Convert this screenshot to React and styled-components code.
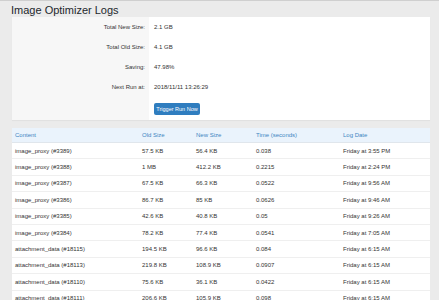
import React from 'react';
import styled, { createGlobalStyle } from 'styled-components';

const GlobalStyle = createGlobalStyle`
    html, body {
        margin: 0;
        padding: 0;
        background: #ebebeb;
        font-family: "Liberation Sans", Arial, sans-serif;
        color: #333;
    }
`;

const Page = styled.div`
    border-top: 1px solid #cfcfcf;
    padding: 2px 9px 0 12px;
`;

const Title = styled.h1`
    margin: 0 0 0 -1px;
    font-size: 11px;
    font-weight: 400;
    line-height: 14px;
    color: #23282d;
`;

const Panel = styled.div`
    display: grid;
    grid-template-columns: 137px 1fr;
    background: #fff;
    box-shadow: 0 1px 1px rgba(0, 0, 0, 0.04);
    height: 103px;
`;

const LabelCol = styled.div`
    background: #f7f7f7;
    display: flex;
    flex-direction: column;
    align-items: flex-end;
    padding-right: 4px;
`;

const ValueCol = styled.div`
    display: flex;
    flex-direction: column;
    padding-left: 5px;
`;

const Cell = styled.div`
    height: 20px;
    display: flex;
    align-items: center;
    font-size: 6px;
    color: #333;
`;

const Button = styled.button`
    margin-top: 5px;
    width: 46px;
    height: 12px;
    padding: 0;
    border: none;
    border-radius: 2px;
    background: #2f7dbf;
    color: #fff;
    font-family: inherit;
    font-size: 5.5px;
`;

const Table = styled.table`
    width: 418px;
    margin-top: 8px;
    border-collapse: collapse;
    background: #fff;
    font-size: 6px;
    table-layout: fixed;
`;

const Th = styled.th`
    height: 14px;
    padding: 0 3px;
    text-align: left;
    font-weight: 400;
    color: #3d86c2;
    background: #eaf3fc;
    border-bottom: 1px solid #e0e6ec;
`;

const Td = styled.td`
    height: 15.4px;
    padding: 0 3px;
    color: #333;
    border-bottom: 1px solid #efefef;
    white-space: nowrap;
`;

const info = [
    ['Total New Size:', '2.1 GB'],
    ['Total Old Size:', '4.1 GB'],
    ['Saving:', '47.98%'],
    ['Next Run at:', '2018/11/11 13:26:29'],
];

const logs = [
    ['image_proxy (#3389)', '57.5 KB', '56.4 KB', '0.038', 'Friday at 3:55 PM'],
    ['image_proxy (#3388)', '1 MB', '412.2 KB', '0.2215', 'Friday at 2:24 PM'],
    ['image_proxy (#3387)', '67.5 KB', '66.3 KB', '0.0522', 'Friday at 9:56 AM'],
    ['image_proxy (#3386)', '86.7 KB', '85 KB', '0.0626', 'Friday at 9:46 AM'],
    ['image_proxy (#3385)', '42.6 KB', '40.8 KB', '0.05', 'Friday at 9:26 AM'],
    ['image_proxy (#3384)', '78.2 KB', '77.4 KB', '0.0541', 'Friday at 7:05 AM'],
    ['attachment_data (#18115)', '194.5 KB', '96.6 KB', '0.084', 'Friday at 6:15 AM'],
    ['attachment_data (#18113)', '219.8 KB', '108.9 KB', '0.0907', 'Friday at 6:15 AM'],
    ['attachment_data (#18110)', '75.6 KB', '36.1 KB', '0.0422', 'Friday at 6:15 AM'],
    ['attachment_data (#18111)', '206.6 KB', '105.9 KB', '0.098', 'Friday at 6:15 AM'],
];

const App = () => {
    return (
        <Page>
            <GlobalStyle />
            <Title>Image Optimizer Logs</Title>
            <Panel>
                <LabelCol>
                    {info.map(([label]) => (
                        <Cell key={label}>{label}</Cell>
                    ))}
                </LabelCol>
                <ValueCol>
                    {info.map(([label, value]) => (
                        <Cell key={label}>{value}</Cell>
                    ))}
                    <div>
                        <Button>Trigger Run Now</Button>
                    </div>
                </ValueCol>
            </Panel>
            <Table>
                <colgroup>
                    <col style={{ width: 127 }} />
                    <col style={{ width: 54 }} />
                    <col style={{ width: 60 }} />
                    <col style={{ width: 87 }} />
                    <col style={{ width: 90 }} />
                </colgroup>
                <thead>
                    <tr>
                        <Th>Content</Th>
                        <Th>Old Size</Th>
                        <Th>New Size</Th>
                        <Th>Time (seconds)</Th>
                        <Th>Log Date</Th>
                    </tr>
                </thead>
                <tbody>
                    {logs.map((row) => (
                        <tr key={row[0]}>
                            {row.map((c, i) => (
                                <Td key={i}>{c}</Td>
                            ))}
                        </tr>
                    ))}
                </tbody>
            </Table>
        </Page>
    );
};

export default App;
